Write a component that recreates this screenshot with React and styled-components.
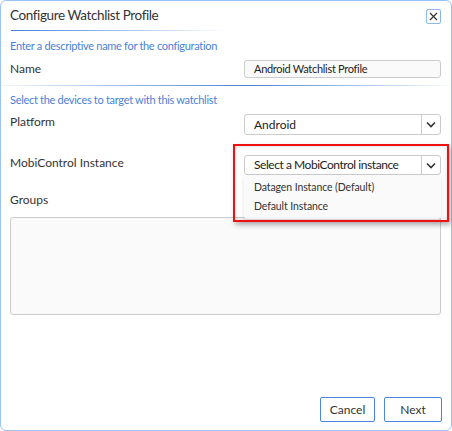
import React from "react";
import styled, { createGlobalStyle } from "styled-components";

const GlobalStyle = createGlobalStyle`
  html, body {
    margin: 0;
    padding: 0;
    background: #ffffff;
  }
  body {
    font-family: "Lato", "Liberation Sans", sans-serif;
    color: #333333;
  }
`;

const Dialog = styled.div`
  position: relative;
  box-sizing: border-box;
  width: 452px;
  height: 431px;
  border: 1px solid #9cc3f7;
  border-radius: 6px;
  background: #ffffff;
  display: flex;
  flex-direction: column;
`;

const Header = styled.div`
  display: flex;
  align-items: center;
  justify-content: space-between;
  padding: 5px 9px 0 9px;
  height: 18px;
`;

const Title = styled.h1`
  margin: 0;
  font-size: 13.5px;
  font-weight: 400;
  letter-spacing: -0.4px;
  color: #333333;
`;

const CloseButton = styled.button`
  box-sizing: border-box;
  width: 15px;
  height: 15px;
  padding: 0;
  border: 1px solid #8ab6f2;
  border-radius: 2px;
  background: #ffffff;
  display: flex;
  align-items: center;
  justify-content: center;
  margin-top: 3px;
  margin-right: 1px;
`;

const Rule = styled.div`
  height: 1px;
  margin: ${(p) => p.$margin || "0"};
  width: ${(p) => p.$width || "auto"};
  background: ${(p) =>
    p.$fade === "both"
      ? "linear-gradient(to right, rgba(74,128,214,0.08), #4a80d6 55%, rgba(74,128,214,0.04))"
      : "linear-gradient(to right, #3f7fdc, rgba(63,127,220,0))"};
`;

const Body = styled.div`
  flex: ${(p) => (p.$grow ? 1 : "none")};
  display: flex;
  flex-direction: column;
  padding: 0 10px 0 9px;
`;

const Hint = styled.p`
  margin: ${(p) => p.$margin || "0"};
  font-size: 11px;
  line-height: 14px;
  letter-spacing: -0.3px;
  color: #4a7fd8;
`;

const Row = styled.div`
  display: flex;
  justify-content: space-between;
  align-items: ${(p) => (p.$top ? "flex-start" : "center")};
  margin: ${(p) => p.$margin || "0"};
  position: relative;
`;

const Label = styled.span`
  font-size: 12px;
  line-height: 16px;
  color: #333333;
  margin-top: ${(p) => p.$offset || "0"};
`;

const TextInput = styled.div`
  box-sizing: border-box;
  width: 197px;
  height: 18px;
  padding: 0 9px;
  border: 1px solid #cccccc;
  border-radius: 3px;
  background: #fafafa;
  font-size: 11px;
  line-height: 16px;
  letter-spacing: -0.3px;
  color: #222222;
`;

const Select = styled.div`
  box-sizing: border-box;
  width: 197px;
  height: ${(p) => p.$height || "21px"};
  border: 1px solid #cccccc;
  border-radius: 3px;
  background: #ffffff;
  display: flex;
  align-items: center;
  font-size: 12px;
  color: #222222;
  position: relative;
  z-index: 2;
`;

const SelectValue = styled.span`
  flex: 1;
  padding-left: 9px;
  line-height: 16px;
  letter-spacing: ${(p) => p.$tight ? "-0.45px" : "0"};
`;

const Caret = styled.span`
  width: 19px;
  height: 100%;
  border-left: 1px solid #cccccc;
  box-sizing: border-box;
  display: flex;
  align-items: center;
  justify-content: center;
`;

const Menu = styled.ul`
  position: absolute;
  top: 20px;
  right: 0;
  width: 197px;
  box-sizing: border-box;
  margin: 0;
  padding: 3px 0;
  list-style: none;
  background: #fafafa;
  border-radius: 0 0 4px 4px;
  box-shadow: 0 2px 4px rgba(0, 0, 0, 0.12);
  z-index: 3;
`;

const MenuItem = styled.li`
  padding: 0 10px;
  font-size: 10.5px;
  line-height: 19px;
  letter-spacing: -0.1px;
  color: #333333;
`;

const Highlight = styled.div`
  position: absolute;
  top: -11px;
  right: -8px;
  width: 216px;
  height: 78px;
  box-sizing: border-box;
  border: 2px solid #ee1111;
  box-shadow: 2px 3px 5px rgba(0, 0, 0, 0.3), inset 0 0 4px rgba(0, 0, 0, 0.15);
  z-index: 4;
  pointer-events: none;
`;

const GroupsBox = styled.div`
  box-sizing: border-box;
  height: 98px;
  margin-top: 9px;
  border: 1px solid #cccccc;
  border-radius: 3px;
  background: #fafafa;
`;

const Footer = styled.div`
  display: flex;
  justify-content: flex-end;
  gap: 9px;
  padding: 0 9px 8px 0;
`;

const Button = styled.button`
  box-sizing: border-box;
  height: 25px;
  width: ${(p) => p.$width};
  border: 1px solid #4a86e0;
  border-radius: 2px;
  background: #ffffff;
  font-family: inherit;
  font-size: 12px;
  color: #333333;
  padding: 0;
`;

const Chevron = () => (
  <svg width="10" height="7" viewBox="0 0 10 7">
    <path d="M1 1.5 L5 5.5 L9 1.5" fill="none" stroke="#333" strokeWidth="1.6" />
  </svg>
);

export default function App() {
  return (
    <>
      <GlobalStyle />
      <Dialog>
        <Header>
          <Title>Configure Watchlist Profile</Title>
          <CloseButton aria-label="Close">
            <svg width="9" height="9" viewBox="0 0 9 9">
              <path d="M1 1 L8 8 M8 1 L1 8" stroke="#333" strokeWidth="1.2" />
            </svg>
          </CloseButton>
        </Header>
        <Rule $width="215px" $margin="6px 0 0 10px" />
        <Body>
          <Hint $margin="8px 0 0 0">Enter a descriptive name for the configuration</Hint>
          <Row $margin="7px 0 0 0">
            <Label>Name</Label>
            <TextInput>Android Watchlist Profile</TextInput>
          </Row>
        </Body>
        <Rule $fade="both" $margin="7px 0 0 0" />
        <Body $grow>
          <Hint $margin="7px 0 0 0">Select the devices to target with this watchlist</Hint>
          <Row $top $margin="7px 0 0 0">
            <Label>Platform</Label>
            <Select>
              <SelectValue>Android</SelectValue>
              <Caret>
                <Chevron />
              </Caret>
            </Select>
          </Row>
          <Row $top $margin="20px 0 0 0">
            <Label>MobiControl Instance</Label>
            <Select $height="20px">
              <SelectValue $tight>Select a MobiControl instance</SelectValue>
              <Caret>
                <Chevron />
              </Caret>
            </Select>
            <Menu>
              <MenuItem>Datagen Instance (Default)</MenuItem>
              <MenuItem>Default Instance</MenuItem>
            </Menu>
            <Highlight />
          </Row>
          <Row $margin="17px 0 0 0">
            <Label>Groups</Label>
          </Row>
          <GroupsBox />
        </Body>
        <Footer>
          <Button $width="55px">Cancel</Button>
          <Button $width="58px">Next</Button>
        </Footer>
      </Dialog>
    </>
  );
}
